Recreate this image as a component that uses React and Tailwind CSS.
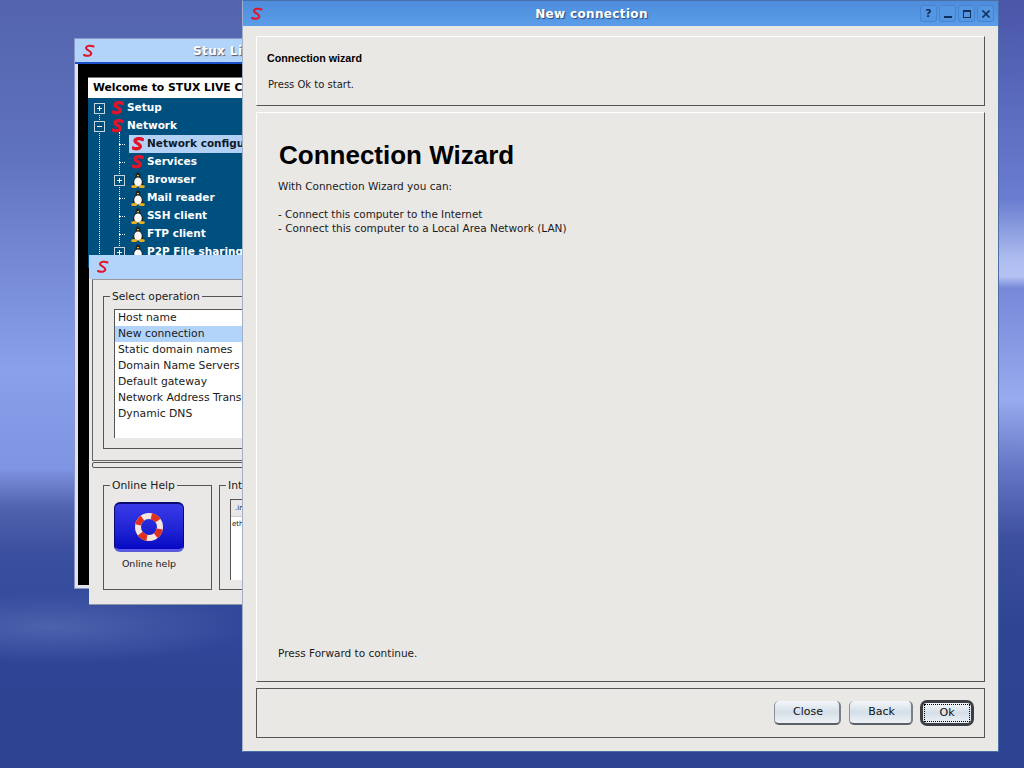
import React from 'react';

const SLogo = ({ className = 'w-3 h-3.5', width = 2 }) => (
    <svg viewBox="0 0 12 14" className={className}>
        <path d="M10.5 2.5 C7.5 1 3.5 1.5 3 3.8 C2.6 6 8.6 6.8 8.3 9.4 C8 12 3.8 12.4 1 11" fill="none" stroke="#e0142a" strokeWidth={width} strokeLinecap="round" />
    </svg>
);

const Tux = () => (
    <svg viewBox="0 0 14 16" className="w-3.5 h-4">
        <path d="M7 0.5 C5 0.5 4.6 3 4.6 5 C3 8 1.2 10 1.8 13.5 L12.2 13.5 C12.8 10 11 8 9.4 5 C9.4 3 9 0.5 7 0.5 Z" fill="#222" />
        <ellipse cx="7" cy="10" rx="3.8" ry="4.6" fill="#fafafa" />
        <rect x="6" y="3" width="2" height="1.2" fill="#e8b020" />
        <ellipse cx="3.2" cy="14.4" rx="3" ry="1.5" fill="#e8b020" />
        <ellipse cx="10.8" cy="14.4" rx="3" ry="1.5" fill="#e8b020" />
    </svg>
);

const Expander = ({ open }) => (
    <span className="relative block w-[11px] h-[11px] border border-[#c8d4dc] bg-[#00507f]">
        <span className="absolute left-[2px] top-[4px] w-[5px] h-px bg-white" />
        {!open && <span className="absolute left-[4px] top-[2px] w-px h-[5px] bg-white" />}
    </span>
);

const treeRows = [
    { label: 'Setup', level: 0, icon: 's', exp: 'closed' },
    { label: 'Network', level: 0, icon: 's', exp: 'open' },
    { label: 'Network configuration', level: 1, icon: 's', selected: true },
    { label: 'Services', level: 1, icon: 's' },
    { label: 'Browser', level: 1, icon: 'tux', exp: 'closed' },
    { label: 'Mail reader', level: 1, icon: 'tux' },
    { label: 'SSH client', level: 1, icon: 'tux' },
    { label: 'FTP client', level: 1, icon: 'tux' },
    { label: 'P2P File sharing', level: 1, icon: 'tux', exp: 'closed' },
];

const TreeRow = ({ row }) => (
    <div className={`flex items-center h-[18px] ${row.level === 0 ? 'pl-[6px]' : 'pl-[26px]'}`}>
        <div className="w-[11px] h-[11px] shrink-0 flex items-center">
            {row.exp ? <Expander open={row.exp === 'open'} /> : <span className="block w-[12px] ml-[5px] border-t border-dotted border-white" />}
        </div>
        <div className={`flex items-center h-[18px] ml-[4px] pl-[2px] pr-3 whitespace-nowrap ${row.selected ? 'bg-[#b3d1f5] text-[#101828]' : 'text-white'}`}>
            <div className="w-[14px] h-4 flex items-center justify-center shrink-0">
                {row.icon === 's' ? <SLogo className="w-3 h-[14px]" width={3.4} /> : <Tux />}
            </div>
            <span className="ml-[2px] text-[10.5px] font-bold">{row.label}</span>
        </div>
    </div>
);

const operations = ['Host name', 'New connection', 'Static domain names', 'Domain Name Servers', 'Default gateway', 'Network Address Translation', 'Dynamic DNS'];

const LifeRing = () => (
    <svg viewBox="0 0 30 30" className="w-[30px] h-[30px]">
        <circle cx="15" cy="15" r="11" fill="none" stroke="#f6e6e0" strokeWidth="6" />
        <circle cx="15" cy="15" r="11" fill="none" stroke="#e0301e" strokeWidth="6" strokeDasharray="8 9.3" strokeDashoffset="-2" />
    </svg>
);

const WinButton = ({ children }) => (
    <div className="w-[17px] h-[17px] flex items-center justify-center rounded-[3px] border border-[#4584d2] bg-[#5596e2] text-[#10305c]">
        {children}
    </div>
);

const PushButton = ({ label, width }) => (
    <div className={`${width} h-6 flex items-center justify-center pl-[2px] rounded-[5px] border-b-2 border-r-2 border-b-[#5a6068] border-r-[#7a8088] border-l border-l-[#8a9098] bg-gradient-to-b from-[#f4f7fa] via-[#d4dfe9] to-[#eef2f6] text-[11px] text-[#111]`}>
        {label}
    </div>
);

const App = () => {
    return (
        <div className="relative w-[1024px] h-[768px] overflow-hidden font-['DejaVu_Sans',sans-serif] bg-[radial-gradient(ellipse_200px_36px_at_50px_627px,#4d62ac,transparent),linear-gradient(180deg,#5464ae_0%,#5f72be_20%,#8aa0ea_48%,#7f94e2_61%,#5063ae_66%,#3a4f9e_72%,#30479a_82%,#2d4493_90%,#2c4392_100%)]">

            {/* wallpaper, right side has its own light streaks */}
            <div className="absolute right-0 top-0 w-[500px] h-full bg-[linear-gradient(180deg,#4a56a8_0%,#6a7dd0_26%,#b0bff0_34%,#b4c2f2_36%,#7688d8_37.5%,#98abee_52%,#6476c4_61%,#3d4f9f_70%,#2f4593_81%,#2c4392_100%)]" />

            {/* back window: control panel */}
            <div className="absolute left-[74px] top-[38px] w-[400px] h-[551px] flex flex-col bg-black border border-[#8b97c8]">
                <div className="h-[25px] shrink-0 flex items-center pl-2 bg-[#b3d4fa] border-b-2 border-[#1c4fc8]">
                    <SLogo />
                    <span className="ml-[98px] text-[12px] font-bold text-white [text-shadow:1px_1px_1px_#556] tracking-[0.4px]">Stux Live CD</span>
                </div>
                <div className="flex-1 border-x-[3px] border-b-[3px] border-[#dfe3ea] pt-[13px] pl-[10px]">
                    <div className="h-[21px] bg-white border-t border-[#777] flex items-center pl-[5px] text-[10.8px] font-bold text-black">Welcome to STUX LIVE CD</div>
                    <div className="relative bg-[#00507f] h-[170px] overflow-hidden">
                        <div className="absolute left-[11px] top-[14px] h-[160px] border-l border-dotted border-white" />
                        <div className="absolute left-[31px] top-[34px] h-[130px] border-l border-dotted border-white" />
                        <div className="relative pt-px">
                            {treeRows.map(row => <TreeRow key={row.label} row={row} />)}
                        </div>
                    </div>
                </div>
            </div>

            {/* network configuration window */}
            <div className="absolute left-[89px] top-[255px] w-[400px] h-[350px] flex flex-col bg-[#e9e8e6] border-b border-[#8b97a8] text-[#1a1a1a]">
                <div className="h-[24px] shrink-0 flex items-center pl-[8px] bg-[#b3d4fa]">
                    <SLogo />
                </div>
                <div className="mx-[3px] h-[182px] border border-[#666] border-t-[#999] px-[10px] pt-[10px]">
                    <fieldset className="border border-[#555] h-[159px] pl-[10px]">
                        <legend className="ml-[-4px] px-[2px] text-[10.7px] leading-[13px]">Select operation</legend>
                        <div className="h-[129px] bg-white border-l border-t border-[#555] mt-[6px]">
                            {operations.map((op, i) => (
                                <div key={op} className={`h-4 flex items-center pl-[3px] text-[10.8px] whitespace-nowrap ${i === 1 ? 'bg-[#b3d4fa]' : ''}`}>{op}</div>
                            ))}
                        </div>
                    </fieldset>
                </div>
                <div className="mx-[3px] mt-px h-[6px] rounded-[2px] border border-[#555]" />
                <div className="flex gap-[7px] pl-[14px] mt-[11px]">
                    <fieldset className="border border-[#555] w-[109px] h-[111px]">
                        <legend className="ml-[6px] px-[2px] text-[10.8px] leading-[13px]">Online Help</legend>
                        <div className="ml-[10px] mt-[10px] w-[70px] h-[50px] rounded-[6px] border-b-[3px] border-b-[#5a5ae0] border-x border-t-2 border-[#0a0a70] bg-gradient-to-b from-[#3a3ae8] to-[#0606c4] flex items-center justify-center">
                            <LifeRing />
                        </div>
                        <div className="ml-[10px] w-[70px] mt-[5px] text-center text-[9.5px] whitespace-nowrap">Online help</div>
                    </fieldset>
                    <fieldset className="border border-[#555] w-[200px] h-[111px] pl-[10px]">
                        <legend className="ml-[-4px] px-[2px] text-[10.8px] leading-[13px]">Interfaces</legend>
                        <div className="mt-[7px] h-[81px] bg-white border-l border-t border-[#555]">
                            <div className="h-[17px] bg-[#e9e8e6] border-b border-[#ccc] pl-1 text-[7px] leading-[17px]">.interface</div>
                            <div className="pl-px text-[7px] leading-[14px]">eth0</div>
                        </div>
                    </fieldset>
                </div>
            </div>

            {/* new connection wizard */}
            <div className="absolute left-[242px] top-0 w-[757px] h-[752px] flex flex-col bg-[#eae8e5] border border-[#4a6ea8] border-l-[#9fb0c8] text-[#1a1a1a]">
                <div className="h-[25px] shrink-0 flex items-center pl-2 pr-[4px] bg-gradient-to-b from-[#4d8ddc] to-[#5b9de8]">
                    <SLogo />
                    <div className="flex-1 text-center text-[12px] font-bold tracking-[0.35px] text-white [text-shadow:1px_1px_1px_#274a80]">New connection</div>
                    <div className="flex gap-[2px]">
                        <WinButton><span className="text-[11px] font-bold leading-none">?</span></WinButton>
                        <WinButton><span className="block w-[8px] h-[2px] mt-[6px] bg-[#10305c]" /></WinButton>
                        <WinButton><span className="block w-[8px] h-[8px] border border-t-2 border-[#10305c]" /></WinButton>
                        <WinButton>
                            <svg viewBox="0 0 10 10" className="w-[10px] h-[10px]"><path d="M1.5 1.5 L8.5 8.5 M8.5 1.5 L1.5 8.5" stroke="#10305c" strokeWidth="1.7" /></svg>
                        </WinButton>
                    </div>
                </div>
                <div className="flex flex-col mx-[13px] mt-[10px] w-[729px] gap-[6px]">
                    <div className="h-[70px] border border-white border-r-[#555] border-b-[#555] pl-[10px] pt-[15px]">
                        <div className="font-['Liberation_Sans',sans-serif] text-[10.7px] font-bold leading-[13px] text-black">Connection wizard</div>
                        <div className="mt-[13px] ml-px text-[10px] leading-[13px]">Press Ok to start.</div>
                    </div>
                    <div className="h-[570px] flex flex-col border border-white border-r-[#555] border-b-[#555] pl-[21px]">
                        <div className="mt-[23px] ml-px font-['Liberation_Sans',sans-serif] text-[26px] font-bold leading-[38px] text-black">Connection Wizard</div>
                        <div className="mt-[5px] text-[10.5px] leading-[14px]">With Connection Wizard you can:</div>
                        <div className="mt-[14px] text-[10.4px] leading-[14px]">- Connect this computer to the Internet</div>
                        <div className="text-[10.5px] leading-[14px]">- Connect this computer to a Local Area Network (LAN)</div>
                        <div className="mt-auto mb-[21px] text-[10.5px] leading-[14px]">Press Forward to continue.</div>
                    </div>
                    <div className="h-[50px] flex items-center justify-end gap-[7px] border border-[#555] pr-[10px]">
                        <PushButton label="Close" width="w-[67px]" />
                        <div className="ml-px">
                            <PushButton label="Back" width="w-[64px]" />
                        </div>
                        <div className="w-[54px] h-[26px] rounded-[7px] border-[3px] border-[#3c4044] bg-gradient-to-b from-[#f4f7fa] via-[#d4dfe9] to-[#eef2f6] p-px">
                            <div className="h-full flex items-center justify-center border border-dotted border-black text-[11px] text-[#111]">Ok</div>
                        </div>
                    </div>
                </div>
            </div>
        </div>
    );
};

export default App;
